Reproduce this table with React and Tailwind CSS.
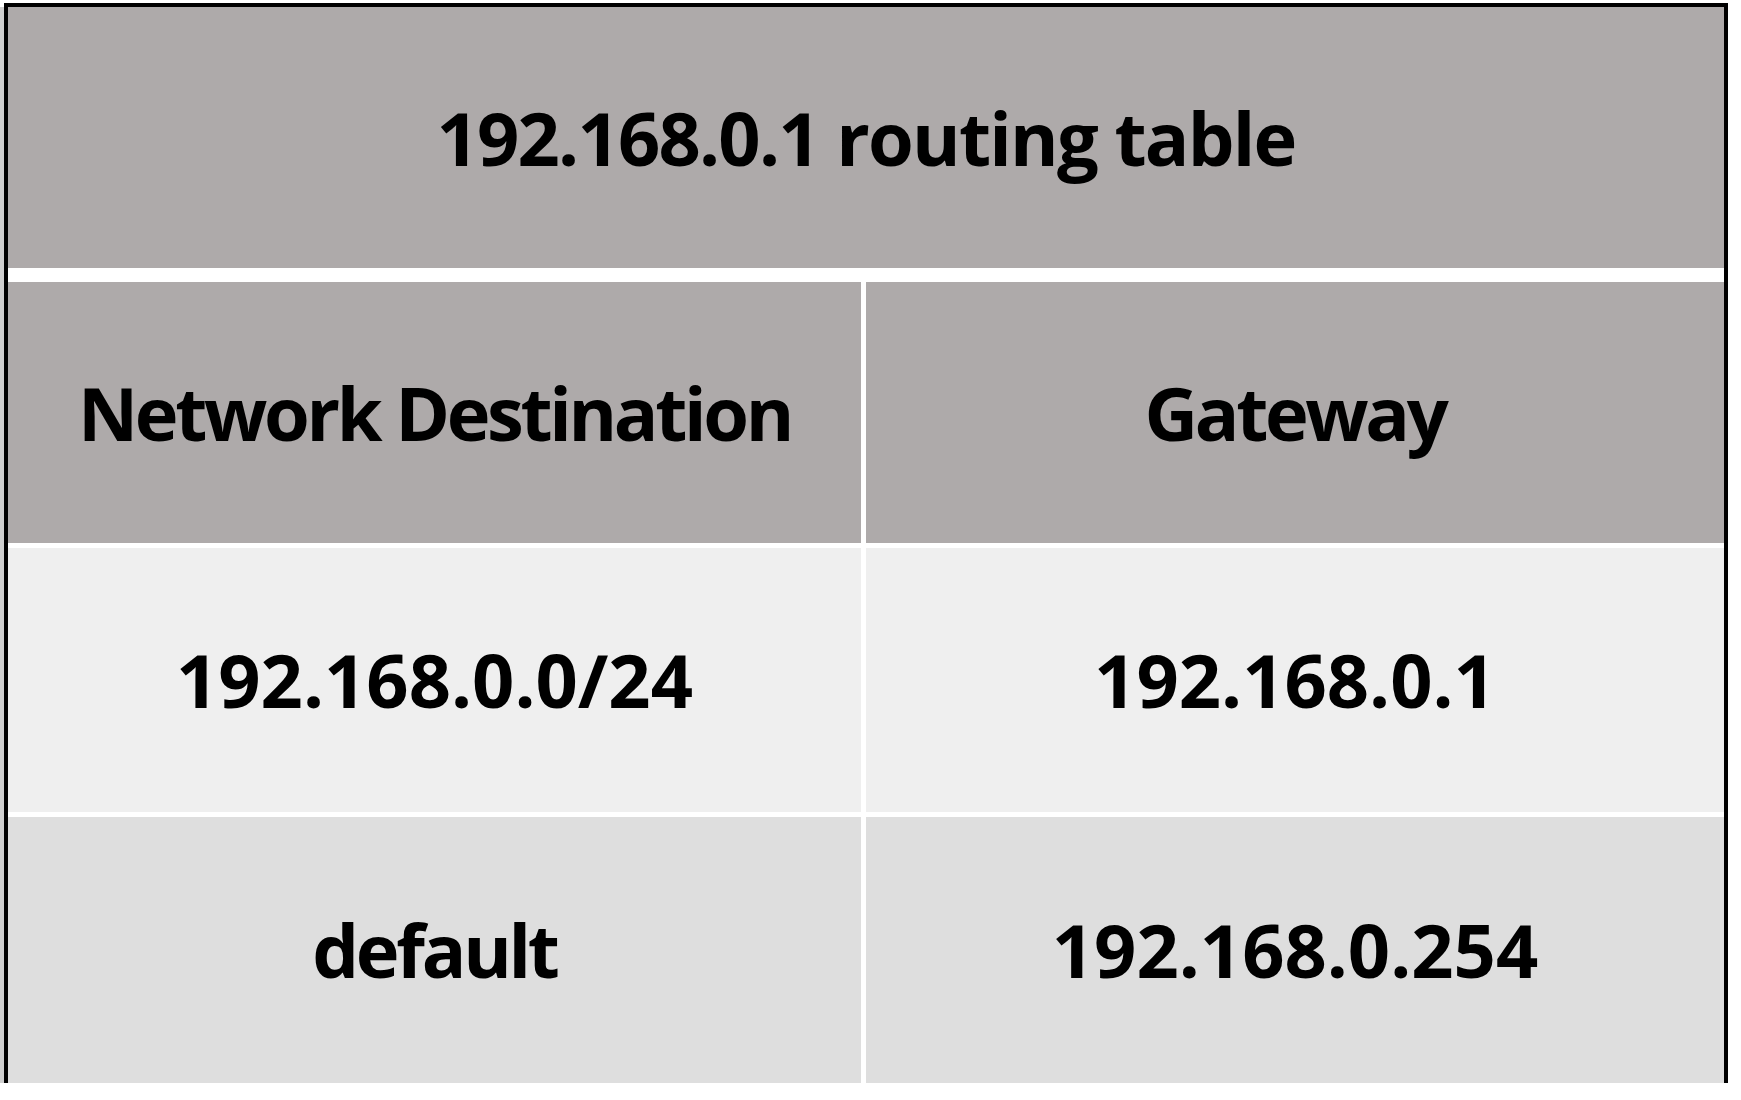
import React from 'react';

const rows = [
  { dest: '192.168.0.0/24', gw: '192.168.0.1', bg: 'bg-[#efefef]', h: 'h-[264px]', dt: '' },
  { dest: 'default', gw: '192.168.0.254', bg: 'bg-[#dedede]', h: 'h-[266px]', dt: 'tracking-[-0.044em]' },
];

const Cell = ({ children, className, track }) => (
  <div className={`flex items-center justify-center ${className}`}>
    <span className={`font-bold text-black leading-none ${track || ''}`}>{children}</span>
  </div>
);

export default function App() {
  return (
    <div
      className="w-[1741px] h-[1100px] bg-white pt-[3px]"
      style={{ fontFamily: '"Open Sans", "Liberation Sans", sans-serif' }}
    >
      <div className="flex">
        {/* thin grey gutter left of the frame */}
        <div className="w-[4px] mt-[4px] h-[1076px] bg-[#cfcfcf]" />
        <div className="w-[1724px] border-t-4 border-x-4 border-black bg-white text-[74px]">
          <Cell className="h-[261px] bg-[#aeaaaa]" track="tracking-[-0.024em]">
            192.168.0.1 routing table
          </Cell>
          <div className="mt-[14px] grid grid-cols-[853px_858px] gap-x-[5px] gap-y-[5px]">
            <Cell className="h-[261px] bg-[#aeaaaa]" track="tracking-[-0.045em]">
              Network Destination
            </Cell>
            <Cell className="h-[261px] bg-[#aeaaaa]" track="tracking-[-0.045em]">
              Gateway
            </Cell>
            {rows.map((r) => (
              <React.Fragment key={r.dest}>
                <Cell className={`${r.h} ${r.bg}`} track={r.dt}>{r.dest}</Cell>
                <Cell className={`${r.h} ${r.bg}`}>{r.gw}</Cell>
              </React.Fragment>
            ))}
          </div>
        </div>
      </div>
    </div>
  );
}
